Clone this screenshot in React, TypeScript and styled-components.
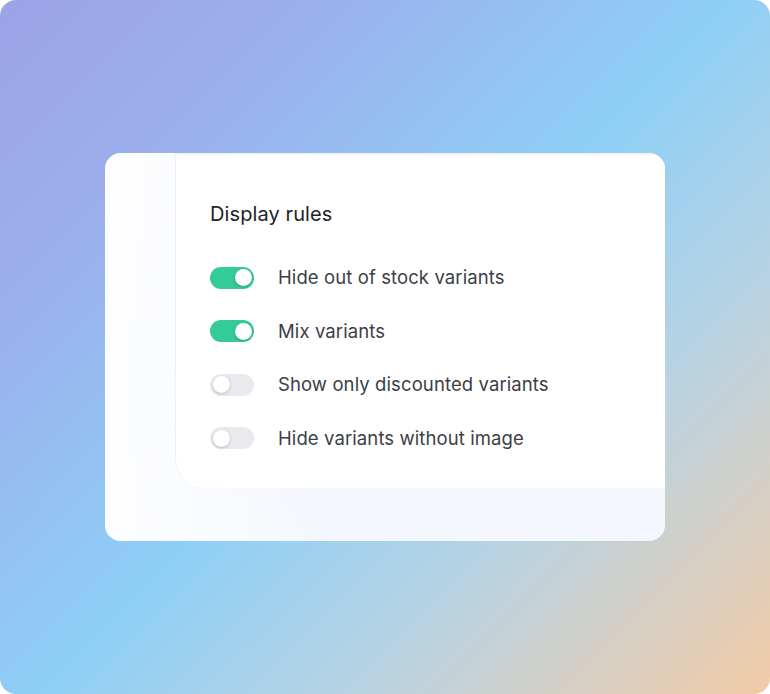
import React from "react";
import styled, { createGlobalStyle } from "styled-components";

const Global = createGlobalStyle`
  html, body { margin: 0; padding: 0; background: #ffffff; }
  body { font-family: "Inter", "Noto Sans", sans-serif; }
`;

const Page = styled.div`
  width: 770px;
  height: 694px;
  border-radius: 16px;
  overflow: hidden;
  background: linear-gradient(135deg, #9ca3e6 0%, #9bb0ec 22%, #8ecff6 50%, #b9d3e2 72%, #f2cba6 100%);
  display: flex;
  align-items: center;
  justify-content: center;
`;

const Card = styled.div`
  width: 560px;
  height: 388px;
  box-sizing: border-box;
  border-radius: 16px;
  overflow: hidden;
  background: linear-gradient(180deg, #f6f8fd 0%, #f1f5fc 60%, #f4f7fd 100%);
  display: flex;
  padding-left: 70px;
  position: relative;
  &::before {
    content: "";
    position: absolute;
    inset: 0;
    background: linear-gradient(90deg, rgba(255,255,255,0.9) 0%, rgba(255,255,255,0) 40%);
    pointer-events: none;
  }
`;

const Panel = styled.div`
  flex: 1;
  height: 335px;
  margin-right: -20px;
  box-sizing: border-box;
  background: #ffffff;
  border-top: 2px solid #f1f3f6;
  border-left: 1px solid #eef1f6;
  border-bottom-left-radius: 30px;
  padding: 45px 0 0 34px;
  position: relative;
  z-index: 1;
`;

const Title = styled.h2`
  margin: 0 0 38px;
  font-size: 20px;
  font-weight: 400;
  color: #1f2328;
  letter-spacing: 0.1px;
  line-height: 28px;
`;

const List = styled.div`
  display: flex;
  flex-direction: column;
  gap: 30.5px;
`;

const Row = styled.div`
  display: flex;
  align-items: center;
  gap: 24px;
  height: 23px;
`;

const Track = styled.div<{ $on: boolean }>`
  width: 44px;
  height: 22px;
  border-radius: 11px;
  background: ${(p) => (p.$on ? "#33cb96" : "#e9eaed")};
  position: relative;
  flex-shrink: 0;
`;

const Knob = styled.div<{ $on: boolean }>`
  position: absolute;
  top: 2.5px;
  left: ${(p) => (p.$on ? "24.5px" : "2.5px")};
  width: 17px;
  height: 17px;
  border-radius: 50%;
  background: #ffffff;
  box-shadow: 0 1px 3px rgba(0, 0, 0, 0.22);
`;

const Label = styled.span`
  font-size: 18.5px;
  color: #3b4047;
  letter-spacing: 0.1px;
  line-height: 23px;
  white-space: nowrap;
`;

const rules = [
  { label: "Hide out of stock variants", on: true },
  { label: "Mix variants", on: true },
  { label: "Show only discounted variants", on: false },
  { label: "Hide variants without image", on: false },
];

export default function App() {
  return (
    <>
      <Global />
      <Page>
        <Card>
          <Panel>
            <Title>Display rules</Title>
            <List>
              {rules.map((r) => (
                <Row key={r.label}>
                  <Track $on={r.on}>
                    <Knob $on={r.on} />
                  </Track>
                  <Label>{r.label}</Label>
                </Row>
              ))}
            </List>
          </Panel>
        </Card>
      </Page>
    </>
  );
}
